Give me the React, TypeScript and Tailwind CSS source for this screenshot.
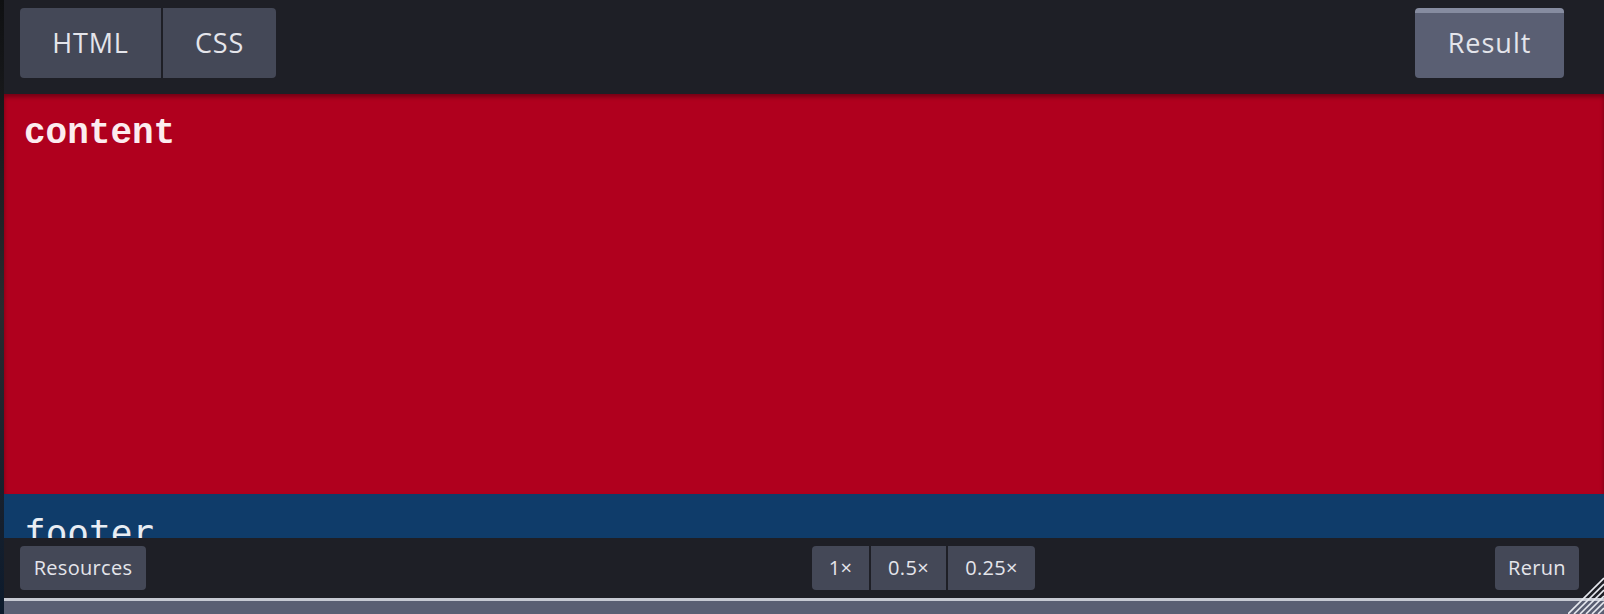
import React from "react";

const ui = { fontFamily: "'Open Sans', Lato, sans-serif" };

export default function App() {
  return (
    <div className="flex w-[1604px] h-[614px] overflow-hidden bg-[#1e1f26]" style={ui}>
      <div className="w-[4px] h-full bg-gradient-to-b from-[#0f1012] via-[#2a2b2f] to-[#0c1a2c]" />
      <div className="flex-1 flex flex-col min-w-0 relative">
        {/* header */}
        <div className="h-[94px] bg-[#1e1f26] flex items-start justify-between pl-4 pr-[40px] pt-2">
          <div className="flex gap-[2px] rounded-[4px] overflow-hidden">
            <div className="w-[141px] h-[70px] bg-[#444857] flex items-center justify-center text-[27px] text-[#e4e5eb] tracking-[0.8px]">
              HTML
            </div>
            <div className="w-[113px] h-[70px] bg-[#444857] flex items-center justify-center text-[27px] text-[#e4e5eb] tracking-[0.8px]">
              CSS
            </div>
          </div>
          <div className="w-[149px] h-[70px] bg-[#5a5f73] border-t-[5px] border-[#868ca0] rounded-[4px] flex items-center justify-center text-[27px] text-[#e4e5eb] tracking-[1px] pb-[4px]">
            Result
          </div>
        </div>
        {/* content */}
        <div className="h-[400px] bg-[#b0001e] shadow-[inset_0_3px_4px_rgba(0,0,0,0.35)] pl-5 pt-[22px]">
          <div
            className="text-[36px] leading-none font-bold text-[#fcecef]"
            style={{ fontFamily: "'Liberation Mono', 'Courier New', monospace" }}
          >
            content
          </div>
        </div>
        <div className="h-[44px] bg-[#0f3c6a] pl-5 pt-[21px] overflow-hidden">
          <div
            className="text-[36px] leading-none text-[#e8edf3]"
            style={{ fontFamily: "'DejaVu Sans Mono', monospace" }}
          >
            footer
          </div>
        </div>
        {/* bottom bar */}
        <div className="h-[60px] bg-[#1e1f26] flex items-center pl-4 pr-[25px]">
          <div className="w-[126px] h-[44px] bg-[#444857] rounded-[4px] flex items-center justify-center text-[20px] tracking-[0.3px] text-[#e4e5eb]">
            Resources
          </div>
          <div className="ml-[666px] flex gap-[2px] rounded-[4px] overflow-hidden">
            <div className="w-[57px] h-[44px] bg-[#444857] flex items-center justify-center text-[20px] tracking-[0.3px] text-[#e4e5eb]">
              1×
            </div>
            <div className="w-[75px] h-[44px] bg-[#444857] flex items-center justify-center text-[20px] tracking-[0.3px] text-[#e4e5eb]">
              0.5×
            </div>
            <div className="w-[87px] h-[44px] bg-[#444857] flex items-center justify-center text-[20px] tracking-[0.3px] text-[#e4e5eb]">
              0.25×
            </div>
          </div>
          <div className="ml-auto w-[84px] h-[44px] bg-[#444857] rounded-[4px] flex items-center justify-center text-[20px] tracking-[0.3px] text-[#e4e5eb]">
            Rerun
          </div>
        </div>
        <div className="h-[3px] bg-[#c7cad3]" />
        <div className="h-[13px] bg-[#5a5f73]" />
        <svg
          className="absolute right-0 bottom-0"
          width="36"
          height="40"
          viewBox="0 0 36 40"
        >
          <g stroke="#e8eaf0" strokeWidth="1.6">
            <line x1="0" y1="40" x2="36" y2="4" />
            <line x1="6" y1="40" x2="36" y2="10" />
            <line x1="12" y1="40" x2="36" y2="16" />
            <line x1="18" y1="40" x2="36" y2="22" />
            <line x1="24" y1="40" x2="36" y2="28" />
            <line x1="30" y1="40" x2="36" y2="34" />
          </g>
        </svg>
      </div>
    </div>
  );
}
